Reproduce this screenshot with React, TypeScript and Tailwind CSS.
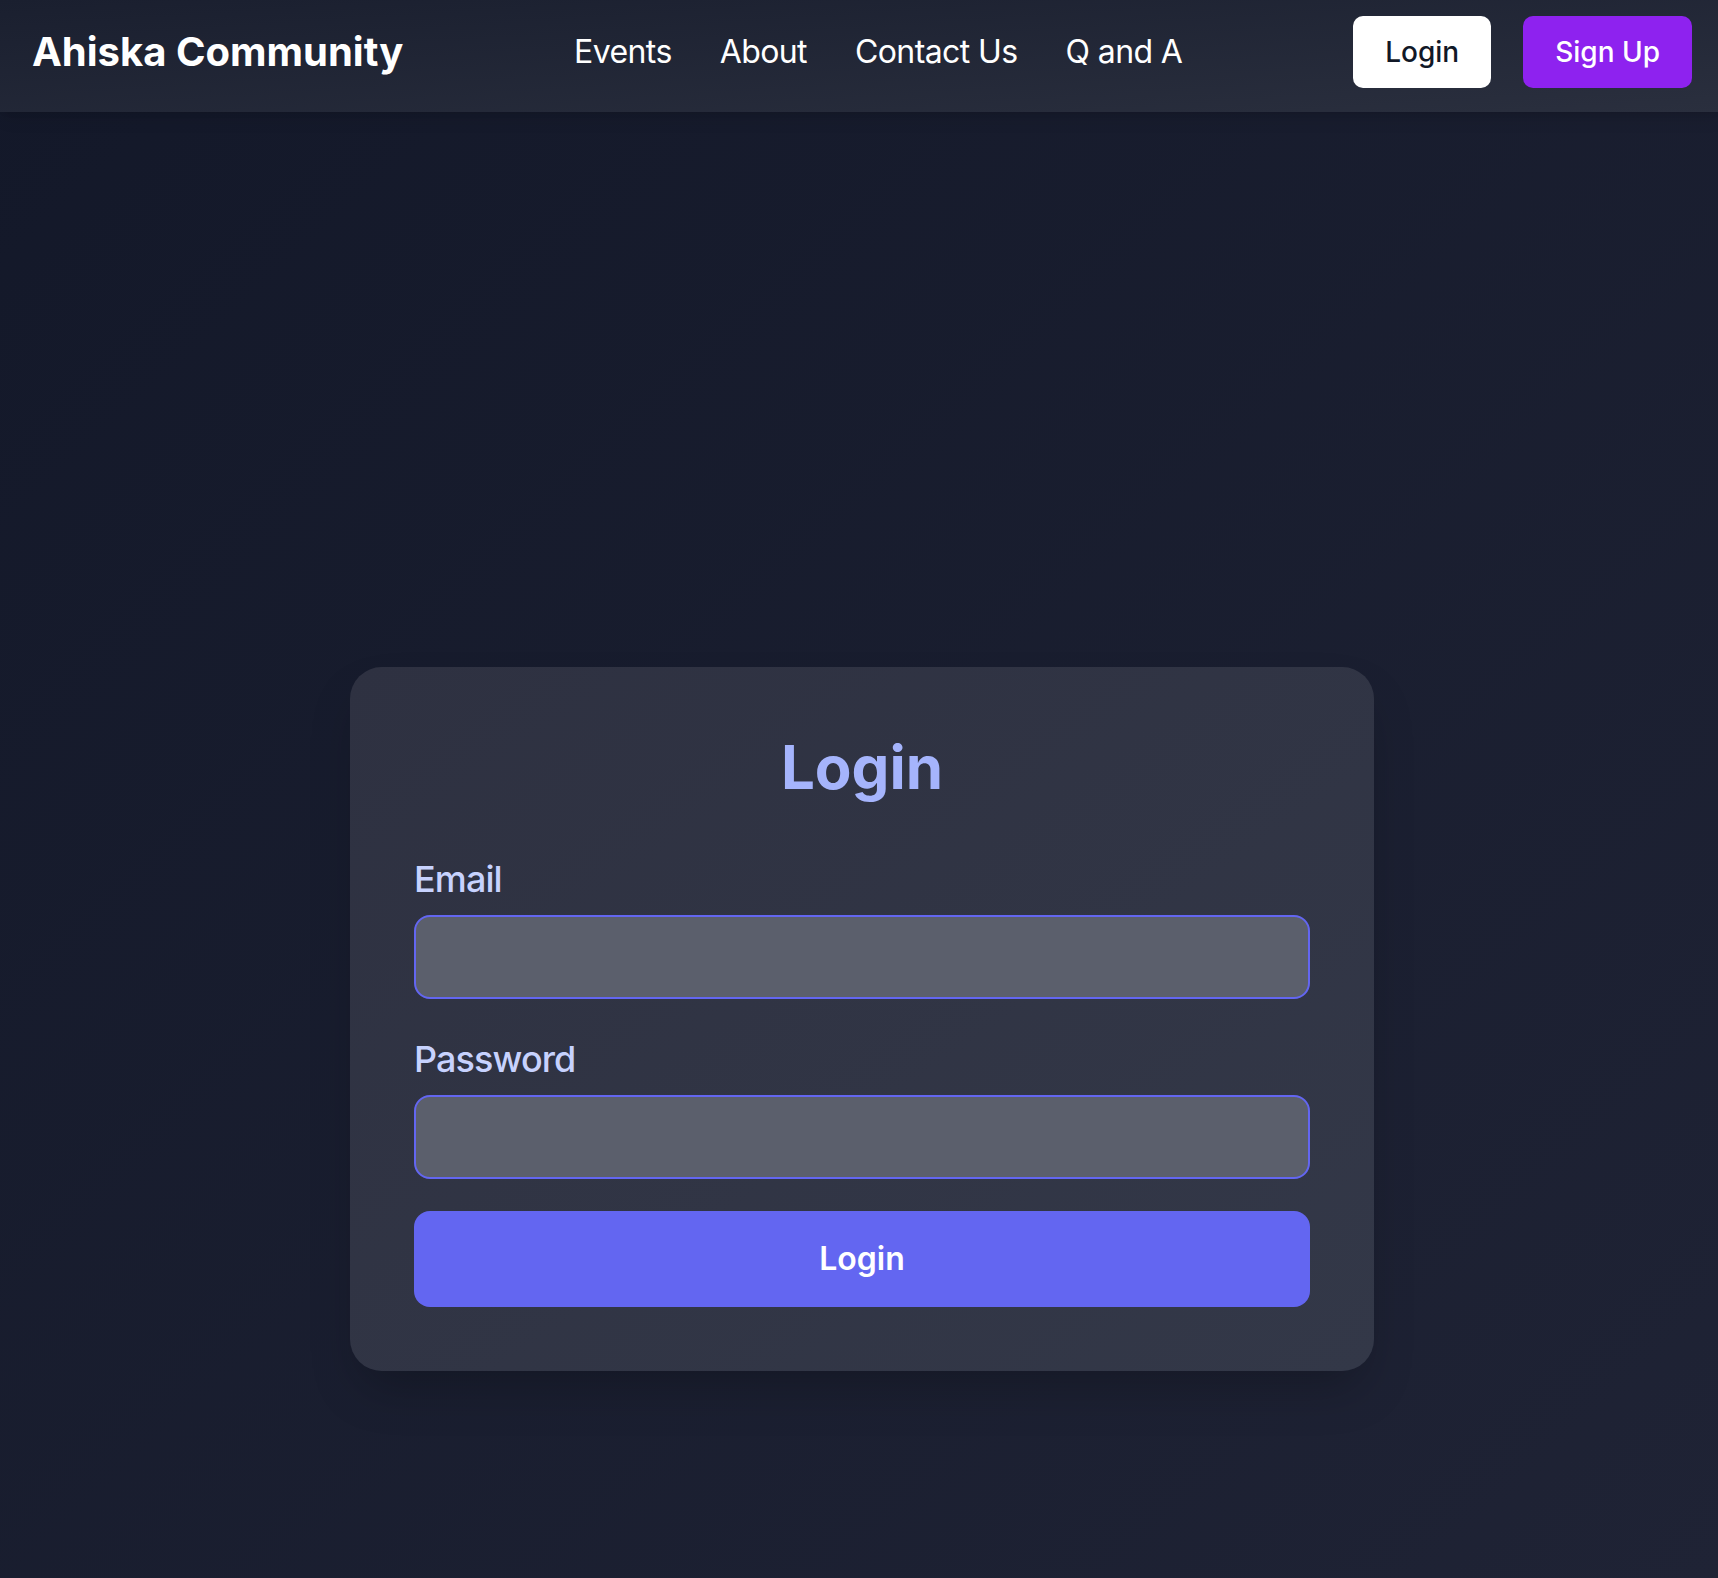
import React from 'react';

const navLinks = ['Events', 'About', 'Contact Us', 'Q and A'];

function Header() {
  return (
    <header className="flex items-center justify-between px-8 pt-4 pb-6 h-[112px] bg-gradient-to-br from-[#1a1f2f] to-[#2a2f3e] shadow-lg">
      <h1 className="text-[40px] leading-[56px] font-bold text-white">Ahiska Community</h1>

      <nav className="flex items-center gap-12">
        {navLinks.map((link) => (
          <a key={link} href="#" className="text-[32px] leading-[48px] tracking-[-0.6px] text-white">
            {link}
          </a>
        ))}
      </nav>

      <div className="flex items-center gap-8">
        <button className="h-[72px] px-[32px] rounded-[10px] bg-white text-[#111827] text-[28px] font-medium">
          Login
        </button>
        <button className="h-[72px] px-8 rounded-[10px] bg-[#8e22ef] text-white text-[28px] font-medium">
          Sign Up
        </button>
      </div>
    </header>
  );
}

function LoginCard() {
  return (
    <div className="w-[1024px] p-16 rounded-[32px] bg-gradient-to-br from-[#2e3141] to-[#333848] shadow-2xl">
      <h2 className="text-[60px] leading-[72px] font-bold text-[#a5b4fc] text-center mb-12">Login</h2>

      <form className="flex flex-col">
        <label className="text-[36px] leading-[56px] tracking-[-0.9px] font-medium text-[#c7d2fe] mb-2">Email</label>
        <input
          type="email"
          className="h-[84px] rounded-2xl border-2 border-[#6366f1] bg-[#5b5f6c] px-6 text-[32px] text-white outline-none mb-8"
        />

        <label className="text-[36px] leading-[56px] tracking-[-0.9px] font-medium text-[#c7d2fe] mb-2">Password</label>
        <input
          type="password"
          className="h-[84px] rounded-2xl border-2 border-[#6366f1] bg-[#5b5f6c] px-6 text-[32px] text-white outline-none mb-8"
        />

        <button
          type="button"
          className="h-24 rounded-2xl bg-[#6366f1] text-white text-[32px] font-semibold"
        >
          Login
        </button>
      </form>
    </div>
  );
}

export default function App() {
  return (
    <div className="w-full overflow-hidden font-['Inter',sans-serif]">
      <div className="w-[1724px] min-h-[1578px] flex flex-col bg-gradient-to-br from-[#131829] to-[#1f2335]">
        <Header />
        <main className="flex justify-center pt-[555px] pb-[207px]">
          <LoginCard />
        </main>
      </div>
    </div>
  );
}
